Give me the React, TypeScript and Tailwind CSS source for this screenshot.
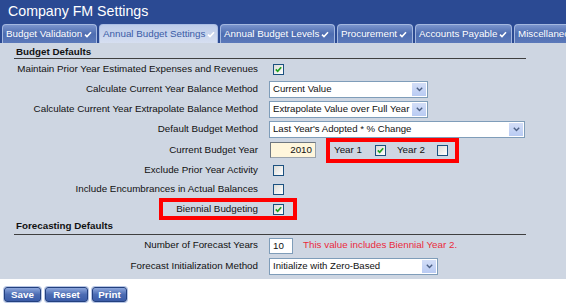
import React from 'react';

const tabs = [
  { label: 'Budget Validation', w: 'w-[95px]', active: false },
  { label: 'Annual Budget Settings', w: 'w-[119px]', active: true },
  { label: 'Annual Budget Levels', w: 'w-[115px]', active: false },
  { label: 'Procurement', w: 'w-[76px]', active: false },
  { label: 'Accounts Payable', w: 'w-[97px]', active: false },
  { label: 'Miscellaneous', w: 'w-[80px]', active: false },
];

const TabCheck = () => (
  <svg width="8" height="7" viewBox="0 0 8 7" className="ml-[2px] shrink-0">
    <path d="M1 3.6 L3 5.6 L7 1.2" fill="none" stroke="#ffffff" strokeWidth="1.6" />
  </svg>
);

const CheckBox = ({ checked, className = '' }: { checked?: boolean; className?: string }) => (
  <div
    className={`w-[11px] h-[11px] shrink-0 border border-[#1c5180] bg-linear-to-br from-[#dcdcd7] to-[#ffffff] flex items-center justify-center ${className}`}
  >
    {checked && (
      <svg width="7" height="7" viewBox="0 0 7 7">
        <path d="M0.8 3.4 L2.7 5.3 L6.2 1.3" fill="none" stroke="#21a121" strokeWidth="1.7" />
      </svg>
    )}
  </div>
);

const Select = ({ value, w }: { value: string; w: string }) => (
  <div className={`${w} h-[17px] border border-[#7f9db9] bg-white flex items-center`}>
    <span className="flex-1 pl-[3px] text-[9.6px] whitespace-nowrap overflow-hidden">{value}</span>
    <div className="w-[14px] h-[13px] mr-[1px] shrink-0 bg-linear-to-b from-[#d3def7] to-[#b9cbf3] flex items-center justify-center">
      <svg width="7" height="5" viewBox="0 0 7 5">
        <path d="M0.8 0.8 L3.5 3.5 L6.2 0.8" fill="none" stroke="#4d6185" strokeWidth="1.4" />
      </svg>
    </div>
  </div>
);

const Row = ({ label, h, children }: { label: string; h: string; children: React.ReactNode }) => (
  <div className={`flex items-center ${h}`}>
    <div className="w-[258px] shrink-0 text-right whitespace-nowrap">{label}</div>
    <div className="ml-[11px] flex items-center">{children}</div>
  </div>
);

const SectionHeader = ({ title, pt }: { title: string; pt: string }) => (
  <div className="ml-[14px] w-[512px] h-[16px] border-b border-[#3f3f3f]">
    <div className={`pl-[2px] ${pt} leading-[12px] font-bold`}>{title}</div>
  </div>
);

const Button = ({ label, w }: { label: string; w: string }) => (
  <div
    className={`${w} h-[15px] rounded-[3px] border border-[#23407e] bg-linear-to-b from-[#8ea7dc] via-[#4c6cb3] to-[#3b5ca8] text-white font-bold flex items-center justify-center leading-none shadow-[0_0_0_1px_#b7c6e6]`}
  >
    {label}
  </div>
);

export default function App() {
  return (
    <div className="w-[566px] h-[305px] bg-white overflow-hidden font-['Liberation_Sans',Arial,sans-serif] text-[9.8px] text-[#111]">
      <div className="bg-[#2b4a93] h-[43px] flex flex-col">
        <div className="h-[24px] pl-[8px] flex items-center text-white text-[14.2px]">Company FM Settings</div>
        <div className="flex gap-[2px] pl-[2px] h-[19px] overflow-hidden">
          {tabs.map((t) => (
            <div
              key={t.label}
              className={`${t.w} shrink-0 h-full rounded-t-[4px] border border-b-0 flex items-center px-[3px] whitespace-nowrap ${
                t.active
                  ? 'border-[#aabde4] bg-linear-to-b from-[#bccbe9] to-[#d6dff1] text-[#3b5ca6]'
                  : 'border-[#a4b8e0] bg-linear-to-b from-[#7a94cc] via-[#4e6db1] to-[#5b79ba] text-white'
              }`}
            >
              <span>{t.label}</span>
              <TabCheck />
            </div>
          ))}
        </div>
      </div>

      <div className="bg-[#ced6e2] h-[236px] flex flex-col">
        <SectionHeader title="Budget Defaults" pt="pt-[3px]" />

        <Row label="Maintain Prior Year Estimated Expenses and Revenues" h="h-[21px]">
          <CheckBox checked className="ml-[4px]" />
        </Row>
        <Row label="Calculate Current Year Balance Method" h="h-[19px]">
          <Select value="Current Value" w="w-[159px]" />
        </Row>
        <Row label="Calculate Current Year Extrapolate Balance Method" h="h-[20px]">
          <Select value="Extrapolate Value over Full Year" w="w-[159px]" />
        </Row>
        <Row label="Default Budget Method" h="h-[20px]">
          <Select value="Last Year's Adopted * % Change" w="w-[256px]" />
        </Row>
        <Row label="Current Budget Year" h="h-[22px]">
          <div className="ml-[1px] w-[46px] h-[16px] border border-[#9aa3ad] border-t-[#6f7780] border-l-[#6f7780] bg-[#fff6dc] text-right pr-[3px] leading-[14px]">
            2010
          </div>
          <div className="ml-[10px] w-[133px] h-[25px] border-4 border-[#ff0000] flex items-center pl-[4px]">
            <span>Year 1</span>
            <CheckBox checked className="ml-[13px]" />
            <span className="ml-[11px]">Year 2</span>
            <CheckBox className="ml-[12px]" />
          </div>
        </Row>
        <Row label="Exclude Prior Year Activity" h="h-[19px]">
          <CheckBox className="ml-[4px]" />
        </Row>
        <Row label="Include Encumbrances in Actual Balances" h="h-[19px]">
          <CheckBox className="ml-[4px]" />
        </Row>
        <div className="h-[20px] flex items-center pl-[159px]">
          <div className="w-[138px] h-[22px] border-4 border-[#ff0000] flex items-center justify-end pr-[9px]">
            <span className="whitespace-nowrap">Biennial Budgeting</span>
            <CheckBox checked className="ml-[15px]" />
          </div>
        </div>

        <SectionHeader title="Forecasting Defaults" pt="pt-[1px]" />

        <Row label="Number of Forecast Years" h="h-[21px]">
          <div className="w-[24px] h-[16px] border border-[#7f9db9] bg-white pl-[3px] leading-[14px]">10</div>
          <span className="ml-[10px] text-[#ea2a3c] whitespace-nowrap">This value includes Biennial Year 2.</span>
        </Row>
        <Row label="Forecast Initialization Method" h="h-[20px]">
          <Select value="Initialize with Zero-Based" w="w-[169px]" />
        </Row>
      </div>

      <div className="flex gap-[4px] pl-[4px] pt-[8px]">
        <Button label="Save" w="w-[37px]" />
        <Button label="Reset" w="w-[43px]" />
        <Button label="Print" w="w-[35px]" />
      </div>
    </div>
  );
}
